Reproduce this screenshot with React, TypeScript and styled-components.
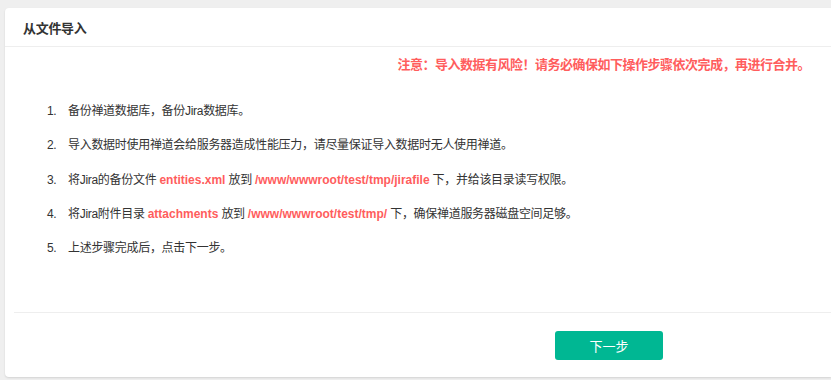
import React from 'react';
import styled, { createGlobalStyle } from 'styled-components';

const GlobalStyle = createGlobalStyle`
  html, body {
    margin: 0;
    padding: 0;
    background: #efefef;
    overflow: hidden;
    font-family: "Liberation Sans", "Noto Sans CJK SC", sans-serif;
  }
`;

const Page = styled.div`
  padding: 8px 0 0 5px;
  height: 380px;
  box-sizing: border-box;
`;

const Panel = styled.div`
  background: #fff;
  border-radius: 4px 0 0 4px;
  height: 369px;
  box-shadow: 0 1px 2px rgba(0, 0, 0, 0.12);
  display: flex;
  flex-direction: column;
`;

const Header = styled.div`
  height: 39px;
  box-sizing: border-box;
  border-bottom: 1px solid #eee;
  padding-left: 18px;
  display: flex;
  align-items: center;
  font-size: 13px;
  font-weight: bold;
  letter-spacing: -0.3px;
  color: #333;
`;

const Body = styled.div`
  flex: 1;
  padding: 8px 21px 0 9px;
  display: flex;
  flex-direction: column;
`;

const Warning = styled.div`
  text-align: right;
  font-size: 13px;
  line-height: 20px;
  font-weight: bold;
  letter-spacing: -0.5px;
  color: #ff5d5d;
`;

const Steps = styled.ol`
  list-style: none;
  margin: 26px 0 0;
  padding: 0 0 0 33px;
  display: flex;
  flex-direction: column;
  gap: 14.3px;
`;

const Step = styled.li`
  display: flex;
  font-size: 12px;
  line-height: 20px;
  letter-spacing: -0.3px;
  color: #333;
`;

const Num = styled.span`
  width: 21px;
  flex: none;
`;

// file names and paths keep their natural Latin spacing
const Mark = styled.strong`
  color: #ff5d5d;
  font-weight: bold;
  letter-spacing: 0;
`;

const Footer = styled.div`
  margin-left: 9px;
  border-top: 1px solid #eee;
  height: 65px;
  box-sizing: border-box;
  padding: 18px 0 0 541px;
`;

const NextButton = styled.button`
  width: 108px;
  height: 29px;
  border: none;
  border-radius: 3px;
  background: #00b793;
  color: #fff;
  font-size: 13px;
  font-family: inherit;
  cursor: pointer;
`;

export default function App() {
  return (
    <>
      <GlobalStyle />
      <Page>
        <Panel>
          <Header>从文件导入</Header>
          <Body>
            <Warning>注意：导入数据有风险！请务必确保如下操作步骤依次完成，再进行合并。</Warning>
            <Steps>
              <Step>
                <Num>1.</Num>
                <span>备份禅道数据库，备份Jira数据库。</span>
              </Step>
              <Step>
                <Num>2.</Num>
                <span>导入数据时使用禅道会给服务器造成性能压力，请尽量保证导入数据时无人使用禅道。</span>
              </Step>
              <Step>
                <Num>3.</Num>
                <span>
                  将Jira的备份文件 <Mark>entities.xml</Mark> 放到 <Mark>/www/wwwroot/test/tmp/jirafile</Mark> 下，并给该目录读写权限。
                </span>
              </Step>
              <Step>
                <Num>4.</Num>
                <span>
                  将Jira附件目录 <Mark>attachments</Mark> 放到 <Mark>/www/wwwroot/test/tmp/</Mark> 下，确保禅道服务器磁盘空间足够。
                </span>
              </Step>
              <Step>
                <Num>5.</Num>
                <span>上述步骤完成后，点击下一步。</span>
              </Step>
            </Steps>
          </Body>
          <Footer>
            <NextButton>下一步</NextButton>
          </Footer>
        </Panel>
      </Page>
    </>
  );
}
